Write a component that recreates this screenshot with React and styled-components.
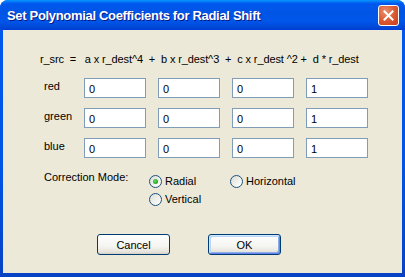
import React from 'react';
import styled, { createGlobalStyle } from 'styled-components';

const Global = createGlobalStyle`
  html, body {
    margin: 0;
    padding: 0;
    background: #fff;
  }
  body {
    font-family: Tahoma, "Liberation Sans", Arial, sans-serif;
    font-size: 11px;
    color: #000;
  }
`

// outer window frame, the blue border is the window background
const Window = styled.div`
  width: 405px;
  height: 277px;
  display: flex;
  flex-direction: column;
  box-sizing: border-box;
  border-radius: 8px 8px 0 0;
  background: linear-gradient(to bottom, #0058ee 0%, #0055e5 60%, #0842c4 100%);
  overflow: hidden;
`
const TitleBar = styled.div`
  height: 30px;
  flex: none;
  display: flex;
  align-items: center;
  justify-content: space-between;
  padding: 0 6px 0 7px;
  box-sizing: border-box;
  background: linear-gradient(to bottom,
    #0997ff 0%, #0058ee 12%, #0055e5 40%, #0056ea 70%, #0047d6 92%, #003dd7 100%);
`
const Title = styled.span`
  color: #fff;
  font-family: "Liberation Sans", Arial, sans-serif;
  font-weight: bold;
  font-size: 13px;
  letter-spacing: -0.32px;
  text-shadow: 1px 1px 0 #0a1883;
  padding-top: 1px;
`
const CloseButton = styled.button`
  width: 21px;
  height: 21px;
  padding: 0;
  border: 1px solid #fff;
  border-radius: 3px;
  background: radial-gradient(circle at 35% 30%, #e8906f 0%, #d9562f 55%, #c5401f 100%);
  display: flex;
  align-items: center;
  justify-content: center;
  box-sizing: border-box;
  margin-top: 1px;
`
const Client = styled.div`
  flex: 1;
  margin: 0 3px 4px 3px;
  background: #ece9d8;
  display: flex;
  flex-direction: column;
  padding-top: 22px;
  box-sizing: border-box;
`
const Formula = styled.div`
  padding-left: 37px;
  line-height: 14px;
  white-space: pre;
  letter-spacing: -0.12px;
`
const CoeffGrid = styled.div`
  margin-top: 12px;
  padding-left: 41px;
  display: grid;
  grid-template-columns: 28px repeat(4, 62px);
  column-gap: 12px;
  row-gap: 10px;
  grid-auto-rows: 20px;
`
const RowLabel = styled.div`
  line-height: 14px;
  padding-top: 1px;
  white-space: nowrap;
`
const NumberBox = styled.input`
  width: 62px;
  height: 20px;
  box-sizing: border-box;
  border: 1px solid #7f9db9;
  background: #fff;
  font-family: inherit;
  font-size: 11px;
  padding: 1px 0 0 4px;
  margin: 0;
  outline: none;
  color: #000;
`
const ModeSection = styled.div`
  margin-top: 12px;
  padding-left: 41px;
  display: flex;
  align-items: flex-start;
`
const ModeLabel = styled.div`
  width: 105px;
  flex: none;
  line-height: 14px;
`
const RadioGroup = styled.div`
  display: grid;
  grid-template-columns: 81px 90px;
  grid-auto-rows: 18px;
  padding-top: 4px;
`
const RadioItem = styled.label`
  display: flex;
  align-items: center;
  gap: 3px;
  height: 14px;
  line-height: 14px;
  white-space: nowrap;
`
const RadioDot = styled.span`
  width: 13px;
  height: 13px;
  flex: none;
  box-sizing: border-box;
  border-radius: 50%;
  border: 1px solid #1c5180;
  background: linear-gradient(135deg, #dcdcd7 0%, #f0f0ea 50%, #ffffff 100%);
  display: flex;
  align-items: center;
  justify-content: center;
  &::after {
    content: '';
    display: ${p => (p.$checked ? 'block' : 'none')};
    width: 5px;
    height: 5px;
    border-radius: 50%;
    background: radial-gradient(circle at 40% 40%, #5ee25e 0%, #21a121 70%, #1a8a1a 100%);
  }
`
const ButtonRow = styled.div`
  margin-top: 24px;
  padding-left: 94px;
  display: flex;
  gap: 38px;
`
const Button = styled.button`
  width: 73px;
  height: 21px;
  box-sizing: border-box;
  border: 1px solid #003c74;
  border-radius: 3px;
  background: linear-gradient(to bottom, #ffffff 0%, #f4f4f0 60%, #e6e4dc 88%, #d6d0c5 100%);
  font-family: inherit;
  font-size: 11px;
  color: #000;
  padding: 0;
  box-shadow: ${p => (p.$primary
    ? 'inset 1px 1px 0 #cee7ff, inset -1px -1px 0 #6982ee, inset 2px 2px 0 #bcd4f6, inset -2px -2px 0 #89ade4'
    : 'none')};
`

const rows = [
  { name: 'red', values: ['0', '0', '0', '1'] },
  { name: 'green', values: ['0', '0', '0', '1'] },
  { name: 'blue', values: ['0', '0', '0', '1'] },
];

export default function App() {
  return (
    <>
      <Global />
      <Window>
        <TitleBar>
          <Title>Set Polynomial Coefficients for Radial Shift</Title>
          <CloseButton aria-label="Close">
            <svg width="11" height="11" viewBox="0 0 11 11">
              <path d="M1.5 1.5 L9.5 9.5 M9.5 1.5 L1.5 9.5" stroke="#fff" strokeWidth="2" strokeLinecap="square" />
            </svg>
          </CloseButton>
        </TitleBar>
        <Client>
          <Formula>{'r_src  =   a x r_dest^4  +  b x r_dest^3  +  c x r_dest ^2 +  d * r_dest'}</Formula>
          <CoeffGrid>
            {rows.map(r => (
              <React.Fragment key={r.name}>
                <RowLabel>{r.name}</RowLabel>
                {r.values.map((v, i) => (
                  <NumberBox key={i} defaultValue={v} />
                ))}
              </React.Fragment>
            ))}
          </CoeffGrid>
          <ModeSection>
            <ModeLabel>Correction Mode:</ModeLabel>
            <RadioGroup>
              <RadioItem><RadioDot $checked />Radial</RadioItem>
              <RadioItem><RadioDot />Horizontal</RadioItem>
              <RadioItem><RadioDot />Vertical</RadioItem>
            </RadioGroup>
          </ModeSection>
          <ButtonRow>
            <Button>Cancel</Button>
            <Button $primary>OK</Button>
          </ButtonRow>
        </Client>
      </Window>
    </>
  );
}
